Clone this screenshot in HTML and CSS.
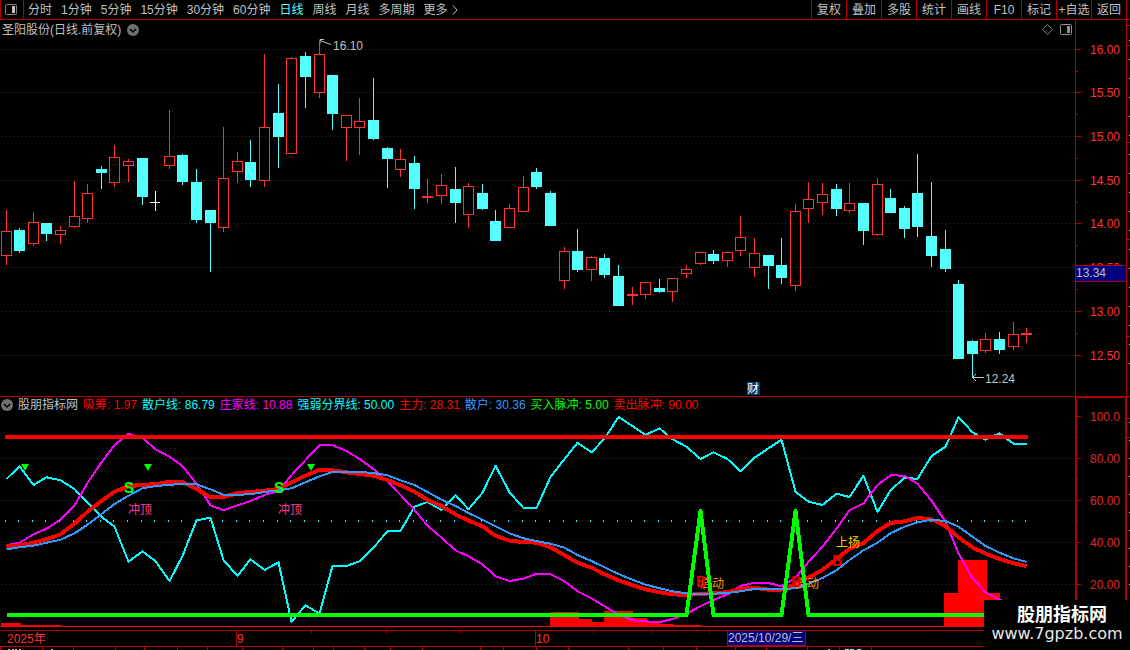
FILE: index.html
```html
<!DOCTYPE html>
<html lang="zh-CN">
<head>
    <meta charset="UTF-8">
    <meta name="viewport" content="width=device-width, initial-scale=1.0">
    <title>圣阳股份 日线</title>
    <link rel="stylesheet" href="styles.css">
</head>
<body>
    <header class="toolbar">
        <button class="layout-button" aria-label="侧栏">
            <svg width="12" height="12" viewBox="0 0 12 12">
                <rect x="0.5" y="0.5" width="11" height="10" rx="1" fill="none" stroke="#808080"/>
                <rect x="7" y="2" width="3" height="7" fill="#c0c0c0"/>
            </svg>
        </button>
        <nav class="periods">
            <button>分时</button>
            <button>1分钟</button>
            <button>5分钟</button>
            <button>15分钟</button>
            <button>30分钟</button>
            <button>60分钟</button>
            <button class="active">日线</button>
            <button>周线</button>
            <button>月线</button>
            <button>多周期</button>
            <button class="more">更多
                <svg width="6" height="10" viewBox="0 0 6 10"><path d="M1 0.5L5 5L1 9.5" fill="none" stroke="#c0c0c0"/></svg>
            </button>
        </nav>
        <nav class="tools">
            <button>复权</button>
            <button>叠加</button>
            <button>多股</button>
            <button>统计</button>
            <button>画线</button>
            <button>F10</button>
            <button>标记</button>
            <button>+自选</button>
            <button>返回</button>
        </nav>
    </header>

    <main>
        <section class="panel">
            <div class="plot">
                <div class="title">
                    <span>圣阳股份(日线.前复权)</span>
                    <svg width="12" height="12" viewBox="0 0 12 12">
                        <circle cx="6" cy="6" r="6" fill="#707070"/>
                        <path d="M3 5L6 8L9 5" fill="none" stroke="#000" stroke-width="1.5"/>
                    </svg>
                    <svg class="title-tools" width="30" height="12" viewBox="0 0 30 12">
                        <path d="M5.5 0.5L10.5 5.5L5.5 10.5L0.5 5.5Z" fill="none" stroke="#808080"/>
                        <rect x="18.5" y="0.5" width="11" height="10" rx="1" fill="none" stroke="#909090"/>
                        <rect x="25" y="2" width="3" height="7" fill="#909090"/>
                    </svg>
                </div>
                <svg id="price-chart" class="price-chart"></svg>
            </div>
            <svg id="price-axis" class="axis"></svg>
        </section>

        <section class="panel">
            <div class="plot">
                <div class="legend">
                    <svg width="12" height="12" viewBox="0 0 12 12">
                        <circle cx="6" cy="6" r="6" fill="#707070"/>
                        <path d="M3 5L6 8L9 5" fill="none" stroke="#000" stroke-width="1.5"/>
                    </svg>
                    <span class="name">股朋指标网</span>
                    <span class="red">吸筹: 1.97</span>
                    <span class="cyan">散户线: 86.79</span>
                    <span class="magenta">庄家线: 10.88</span>
                    <span class="cyan">强弱分界线: 50.00</span>
                    <span class="red">主力: 28.31</span>
                    <span class="blue">散户: 30.36</span>
                    <span class="green">买入脉冲: 5.00</span>
                    <span class="red">卖出脉冲: 90.00</span>
                </div>
                <svg id="signal-chart" class="signal-chart"></svg>
            </div>
            <svg id="signal-axis" class="axis"></svg>
        </section>

        <svg id="time-axis" class="time-axis"></svg>
    </main>

    <div class="watermark">
        <strong>股朋指标网</strong>
        <span>www.7gpzb.com</span>
    </div>
    <script src="chart.js"></script>
</body>
</html>
```
FILE: styles.css
```css
* {
    box-sizing: border-box;
}
body {
    position: relative;
    margin: 0;
    background: #000;
    color: #c0c0c0;
    font-family: "Liberation Sans", "Noto Sans CJK SC", sans-serif;
    font-size: 12px;
    line-height: 18px;
    overflow: hidden;
}
button {
    padding: 0;
    border: none;
    background: none;
    color: inherit;
    font: inherit;
    white-space: nowrap;
    cursor: pointer;
}
svg {
    display: block;
    overflow: visible;
}
svg text {
    white-space: pre;
}

/* Toolbar */
.toolbar {
    display: flex;
    height: 20px;
    padding-right: 3px;
    border-bottom: 1px solid #b00000;
}
.layout-button {
    width: 24px;
    padding-left: 4px;
    border-left: 1px solid #b00000;
    border-right: 1px solid #b00000;
}
.periods {
    display: flex;
    flex: 1;
    gap: 9px;
    padding-left: 4px;
}
.periods .active {
    color: #54ffff;
}
.periods .more {
    display: flex;
    align-items: center;
    gap: 4px;
}
.tools {
    display: flex;
    border-right: 1px solid #b00000;
}
.tools button {
    width: 35px;
    border-left: 1px solid #b00000;
}

/* Panels */
.panel {
    display: flex;
    border-bottom: 1px solid #b00000;
}
.plot {
    flex: 1;
    min-width: 0;
    overflow: hidden;
}
.axis {
    width: 55px;
    overflow: hidden;
}
.title {
    display: flex;
    align-items: center;
    gap: 6px;
    height: 19px;
    padding: 0 3px 0 2px;
}
.title-tools {
    margin-left: auto;
}
.price-chart {
    width: 100%;
    height: 357px;
}
.legend {
    display: flex;
    align-items: center;
    gap: 5px;
    height: 17px;
    padding: 0 0 2px 1px;
    white-space: nowrap;
}
.signal-chart {
    width: 100%;
    height: 216px;
}
.time-axis {
    width: 100%;
    height: 19px;
}
.mark {
    font-family: "Liberation Mono", monospace;
    font-weight: bold;
}
.red {
    color: #f00;
}
.cyan {
    color: #0ff;
}
.magenta {
    color: #f0f;
}
.blue {
    color: #3399ff;
}
.green {
    color: #0f0;
}

/* Site mark over the corner of the chart */
.watermark {
    position: absolute;
    right: 0;
    bottom: 0;
    display: flex;
    flex-direction: column;
    align-items: center;
    width: 146px;
    height: 50px;
    padding-top: 5px;
    background: #000;
    color: #fff;
    font-size: 16px;
    line-height: 18px;
}
.watermark strong {
    padding-left: 10px;
    font-size: 18px;
    line-height: 20px;
}
.watermark span {
    font-family: "DejaVu Sans", sans-serif;
    color: #e8e8e8;
}
```
FILE: chart.js
```js
const NS = 'http://www.w3.org/2000/svg';
const STEP = 13.61;
const RED = '#ff3232';
const CYAN = '#54ffff';
const LINE = '#b00000';

// high, body top, body bottom, low
// r = rising (hollow), c = falling (filled), x = unchanged
const candles = [
    ['r', 210, 231, 256, 265], ['c', 228, 230, 251, 253], ['r', 212, 222, 244, 246], ['c', 223, 223, 234, 241],
    ['r', 226, 230, 235, 244], ['r', 181, 216, 227, 228], ['r', 184, 193, 219, 223], ['c', 166, 169, 173, 189],
    ['r', 145, 157, 183, 187], ['r', 159, 161, 166, 182], ['c', 158, 158, 197, 205], ['x', 191, 202, 203, 211],
    ['r', 110, 156, 166, 169], ['c', 154, 155, 182, 185], ['c', 169, 182, 220, 223], ['c', 210, 210, 223, 272],
    ['r', 127, 178, 228, 232], ['r', 152, 161, 172, 183], ['c', 140, 162, 180, 187], ['r', 54, 127, 181, 187],
    ['c', 84, 113, 137, 168], ['r', 57, 58, 154, 154], ['c', 52, 56, 77, 108], ['r', 43, 54, 93, 98],
    ['c', 75, 75, 114, 130], ['r', 115, 115, 128, 161], ['r', 98, 121, 128, 155], ['c', 78, 120, 139, 140],
    ['c', 147, 148, 159, 188], ['r', 149, 159, 170, 177], ['c', 156, 163, 189, 209], ['r', 179, 196, 198, 203],
    ['r', 174, 185, 196, 204], ['c', 167, 189, 203, 223], ['r', 183, 186, 215, 228], ['c', 184, 193, 209, 210],
    ['c', 210, 221, 241, 241], ['r', 204, 208, 228, 228], ['r', 176, 187, 212, 212], ['c', 168, 172, 187, 189],
    ['c', 191, 193, 226, 226], ['r', 247, 251, 281, 289], ['c', 229, 251, 270, 272], ['r', 256, 257, 270, 281],
    ['c', 254, 258, 275, 278], ['c', 265, 276, 306, 306], ['r', 287, 294, 296, 305], ['r', 282, 282, 295, 299],
    ['c', 279, 288, 292, 293], ['r', 278, 278, 292, 302], ['r', 265, 269, 274, 278], ['r', 252, 252, 264, 265],
    ['c', 250, 254, 261, 264], ['r', 252, 252, 261, 267], ['r', 216, 237, 251, 256], ['r', 238, 253, 268, 277],
    ['c', 255, 255, 266, 289], ['c', 238, 265, 278, 284], ['r', 204, 211, 286, 291], ['r', 182, 199, 209, 223],
    ['r', 183, 194, 203, 215], ['c', 184, 189, 209, 216], ['r', 183, 203, 211, 213], ['c', 203, 203, 231, 245],
    ['r', 178, 184, 235, 236], ['c', 189, 198, 213, 213], ['c', 206, 208, 229, 238], ['c', 154, 193, 227, 237],
    ['c', 182, 236, 256, 267], ['c', 230, 249, 269, 272], ['c', 280, 284, 359, 359], ['c', 340, 341, 354, 377],
    ['r', 333, 339, 351, 353], ['c', 332, 339, 350, 354], ['r', 322, 334, 347, 350], ['r', 328, 333, 335, 343]
];

// Indicator levels, three units to a pixel
const retailLine = [
    252, 214, 270, 247, 256, 282, 323, 365, 395, 500, 469, 499, 558, 483, 376, 368, 495, 543, 493,
    525, 502, 680, 631, 656, 513, 513, 499, 458, 408, 408, 335, 321, 345, 300, 343, 293, 212, 292,
    339, 339, 246, 192, 143, 172, 131, 66, 93, 120, 100, 133, 155, 192, 172, 192, 229, 188, 160,
    134, 290, 320, 330, 296, 306, 242, 351, 286, 248, 252, 183, 155, 66, 112, 134, 115, 146, 146
];
const bankerLine = [
    451, 443, 418, 401, 374, 331, 264, 202, 150, 117, 128, 163, 185, 213, 266, 331, 346, 331, 318,
    300, 289, 240, 195, 151, 151, 168, 192, 222, 260, 300, 345, 392, 428, 466, 484, 508, 544, 558,
    551, 536, 538, 559, 589, 610, 634, 658, 676, 679, 682, 672, 656, 634, 615, 598, 573, 563, 564,
    574, 548, 500, 455, 401, 346, 325, 270, 241, 242, 266, 317, 380, 475, 550, 592, 615, 626, 630
];
const mainForce = [
    454, 451, 443, 433, 418, 386, 350, 318, 290, 274, 269, 268, 260, 261, 282, 307, 306, 294, 291,
    287, 282, 262, 242, 224, 226, 232, 237, 242, 255, 271, 290, 315, 333, 358, 377, 394, 422, 437,
    441, 443, 457, 481, 503, 518, 538, 556, 571, 583, 592, 598, 600, 597, 594, 592, 582, 578, 584,
    584, 568, 548, 524, 492, 461, 444, 408, 384, 379, 369, 373, 393, 427, 457, 476, 492, 505, 513
];
const retail = [
    463, 457, 452, 443, 434, 415, 389, 357, 327, 302, 280, 273, 270, 266, 268, 283, 299, 299, 298,
    291, 286, 280, 262, 244, 231, 230, 231, 234, 241, 256, 270, 291, 314, 333, 354, 374, 394, 415,
    430, 438, 446, 458, 480, 498, 517, 537, 554, 569, 580, 589, 595, 598, 596, 594, 589, 582, 581,
    582, 580, 566, 549, 526, 495, 466, 443, 415, 395, 382, 374, 378, 395, 425, 453, 473, 490, 501
];

// x, width, height of the volume-like blocks at the foot of the indicator
const blocks = [
    [1, 20, 4], [21, 40, 2], [550, 29, 15], [579, 13, 8], [592, 12, 5], [604, 29, 16], [633, 14, 9],
    [647, 13, 5], [660, 14, 3], [674, 27, 2], [944, 14, 34], [958, 29, 67], [987, 13, 34]
];

function add(svg, tag, attrs, text) {
    const el = document.createElementNS(NS, tag);
    for (const key in attrs) el.setAttribute(key, attrs[key]);
    if (text) el.textContent = text;
    svg.appendChild(el);
    return el;
}

function rect(svg, x, y, width, height, fill) {
    return add(svg, 'rect', { x, y, width, height, fill });
}

function label(svg, x, y, text, fill, size = 12) {
    return add(svg, 'text', { x, y, fill, 'font-size': size }, text);
}

function barX(i) {
    return Math.floor(6 + i * STEP);
}

function gridLine(svg, y) {
    add(svg, 'line', {
        x1: 1, x2: '100%', y1: y + 0.5, y2: y + 0.5,
        stroke: '#a00000', 'stroke-dasharray': '1 3', 'shape-rendering': 'crispEdges'
    });
}

function series(svg, points, color, width) {
    add(svg, 'polyline', {
        points: points.map(p => p.join(',')).join(' '),
        fill: 'none', stroke: color, 'stroke-width': width, 'stroke-linejoin': 'round',
        'shape-rendering': 'crispEdges'
    });
}

function drawPrice() {
    const svg = document.getElementById('price-chart');
    const top = 39;
    [49, 92, 136, 180, 223, 267, 311, 355].forEach(y => gridLine(svg, y - top));

    candles.forEach(([type, high, open, close, low], i) => {
        const x = barX(i);
        const color = type === 'r' ? RED : type === 'c' ? CYAN : '#fff';
        if (type === 'r') {
            rect(svg, x, high - top, 1, open - high, color);
            rect(svg, x, close - top, 1, low - close, color);
            const body = rect(svg, x - 4.5, open - top + 0.5, 10, close - open - 1, 'none');
            body.setAttribute('stroke', color);
        } else {
            rect(svg, x, high - top, 1, low - high, color);
            rect(svg, x - 5, open - top, type === 'x' ? 10 : 11, close - open, color);
        }
    });

    add(svg, 'path', { d: 'M331 5.5L320 1.5M324 0.5H320V5', fill: 'none', stroke: '#c0c0c0' });
    label(svg, 333, 11, '16.10', '#c0c0c0');
    add(svg, 'path', { d: 'M984 338.5H972M976 335L972.5 338.5L976 342', fill: 'none', stroke: '#c0c0c0' });
    label(svg, 985, 344, '12.24', '#c0c0c0');
    rect(svg, 747, 343, 13, 13, '#003a70');
    label(svg, 747, 354, '财', '#fff');
}

function drawSignal() {
    const svg = document.getElementById('signal-chart');
    const line = data => data.map((v, i) => [barX(i) + 0.5, (v / 3 - 19).toFixed(1)]);
    [44, 86, 128, 170].forEach(y => gridLine(svg, y));

    rect(svg, 0, 212, '100%', 1, '#f00');
    blocks.forEach(([x, w, h]) => rect(svg, x, 213 - h, w, h, '#f00'));

    series(svg, line(retailLine), '#0ff', 2);
    series(svg, line(bankerLine), '#f0f', 2);
    for (let i = 0; i < candles.length; i++) rect(svg, barX(i) - 1, 106, 1, 2, '#0ff');
    series(svg, line(mainForce), '#f00', 4);
    series(svg, line(retail), '#3399ff', 2);
    rect(svg, 5, 21, barX(75) - 3, 4, '#f00');

    label(svg, 128, 100, '冲顶', '#ff3c96');
    label(svg, 278, 100, '冲顶', '#ff3c96');
    label(svg, 836, 133, '上扬', '#ffc800');
    label(svg, 700, 174, '启动', '#ff9600');
    label(svg, 795, 174, '启动', '#ff9600');
    [[696, 173], [791, 173], [832, 152]].forEach(([x, y]) => mark(svg, x, y, 'B', '#e00000'));

    const pulse = candles.map((c, i) => [barX(i) + 0.5, i === 51 || i === 58 ? 97 : 201]);
    series(svg, pulse, '#0f0', 4);

    mark(svg, 124, 79, 'S', '#0f0');
    mark(svg, 274, 79, 'S', '#0f0');
    [25, 148, 311].forEach(x => add(svg, 'path', { d: `M${x - 4} 50H${x + 4}L${x} 57Z`, fill: '#0f0' }));
}

function mark(svg, x, y, text, color) {
    label(svg, x, y, text, color, 17).setAttribute('class', 'mark');
}

function drawAxis(id, height, labels, ticks, color) {
    const svg = document.getElementById(id);
    rect(svg, 0, 0, 1, height, LINE);
    rect(svg, 51, 0, 1, height, LINE);
    ticks.forEach(y => rect(svg, 1, y, 2, 1, LINE));
    labels.forEach(([y, text]) => {
        rect(svg, 0, y, 6, 1, LINE);
        label(svg, 15, y + 5, text, color);
    });
    return svg;
}

function drawAxes() {
    const price = drawAxis('price-axis', 376,
        [[29, '16.00'], [72, '15.50'], [116, '15.00'], [160, '14.50'], [203, '14.00'], [247, '13.50'], [291, '13.00'], [335, '12.50']],
        [51, 94, 138, 182, 225, 269, 313], RED);
    rect(price, 1, 245, 50, 17, LINE);
    rect(price, 1, 246, 50, 15, '#000080');
    label(price, 1, 257, '13.34', '#c0c0c0');
    [5, 25, 122, 219, 316].forEach(y => rect(price, 52, y, 3, 1, LINE));
    for (let y = 20; y < 360; y += 19) rect(price, 54, y, 1, 1, '#c0c0c0');

    const signal = drawAxis('signal-axis', 233,
        [[19, '100.0'], [61, '80.00'], [103, '60.00'], [145, '40.00'], [187, '20.00']],
        [40, 82, 124, 166], '#e02828');
    rect(signal, 0, 0, 52, 1, LINE);
    rect(signal, 1, 0, 1, 233, LINE);
    rect(signal, 50, 0, 1, 233, LINE);
    [21, 40].forEach(y => rect(signal, 52, y, 3, 1, LINE));
    for (let y = 25; y < 200; y += 18) rect(signal, 54, y, 1, 1, '#c0c0c0');
}

function drawTime() {
    const svg = document.getElementById('time-axis');
    rect(svg, 0, 15, '100%', 1, LINE);
    [[7, '2025年'], [237, '9'], [536, '10']].forEach(([x, text]) => label(svg, x, 12, text, RED));
    [236, 535].forEach(x => rect(svg, x, 0, 1, 15, LINE));
    [311, 386, 460, 593, 651, 709].forEach(x => rect(svg, x, 0, 1, 2, LINE));
    rect(svg, 727, 0, 79, 15, LINE);
    rect(svg, 728, 0, 77, 14, '#000080');
    label(svg, 728, 11, '2025/10/29/三', '#c0c0c0');
    // top edge of the panel below
    [0, 42, 73, 115, 144, 177, 207, 242, 282, 313, 333, 364, 390, 422, 480, 503, 536, 568, 628, 663, 696, 735, 766, 807, 839, 871]
        .forEach(x => rect(svg, x, 16, 1, 3, LINE));
    [8, 12, 15, 19, 51, 828].forEach(x => rect(svg, x, 18, 2, 1, '#c0c0c0'));
    [845, 850, 857].forEach(x => rect(svg, x, 18, 4, 1, CYAN));
}

drawPrice();
drawSignal();
drawAxes();
drawTime();
```
